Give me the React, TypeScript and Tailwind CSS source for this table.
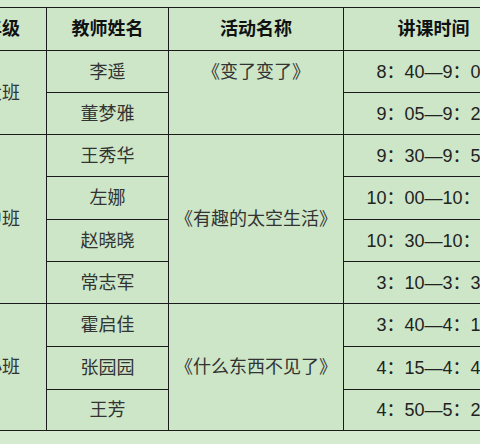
const GROUPS = [
  {
    grade: '大班',
    activity: '《变了变了》',
    top: true,
    rows: [
      { teacher: '李遥', time: '8：40—9：05', h: 'h-[42px]' },
      { teacher: '董梦雅', time: '9：05—9：25', h: 'h-[42px]' },
    ],
  },
  {
    grade: '中班',
    activity: '《有趣的太空生活》',
    top: false,
    rows: [
      { teacher: '王秀华', time: '9：30—9：55', h: 'h-[42px]' },
      { teacher: '左娜', time: '10：00—10：25', h: 'h-[43px]' },
      { teacher: '赵晓晓', time: '10：30—10：55', h: 'h-[42px]' },
      { teacher: '常志军', time: '3：10—3：35', h: 'h-[42px]' },
    ],
  },
  {
    grade: '小班',
    activity: '《什么东西不见了》',
    top: false,
    rows: [
      { teacher: '霍启佳', time: '3：40—4：10', h: 'h-[43px]' },
      { teacher: '张园园', time: '4：15—4：45', h: 'h-[43px]' },
      { teacher: '王芳', time: '4：50—5：20', h: 'h-[41px]' },
    ],
  },
];

const cell = 'border-[1.5px] border-[#1b1b1b] text-center align-middle p-0';

export default function App() {
  return (
    <div
      className="w-[480px] h-[444px] overflow-hidden bg-[#d4ebd0] pt-[7px]"
      style={{ fontFamily: '"Liberation Sans", "Noto Sans CJK SC", sans-serif' }}
    >
      <table className="-ml-[43px] w-[566px] table-fixed border-collapse bg-[#cce6c7] text-[18px] leading-none">
        <colgroup>
          <col className="w-[89px]" />
          <col className="w-[122px]" />
          <col className="w-[175px]" />
          <col className="w-[180px]" />
        </colgroup>
        <thead>
          <tr className="h-[43px] text-[#111] font-bold">
            <th className={cell}>年级</th>
            <th className={cell}>教师姓名</th>
            <th className={cell}>活动名称</th>
            <th className={cell}>讲课时间</th>
          </tr>
        </thead>
        <tbody className="text-[#333]">
          {GROUPS.map((g) =>
            g.rows.map((r, i) => (
              <tr key={r.teacher} className={r.h}>
                {i === 0 && (
                  <td rowSpan={g.rows.length} className={cell}>
                    {g.grade}
                  </td>
                )}
                <td className={cell}>{r.teacher}</td>
                {i === 0 && (
                  <td
                    rowSpan={g.rows.length}
                    className={g.top ? 'border-[1.5px] border-[#1b1b1b] text-center align-top p-0 pt-[12px]' : cell}
                  >
                    {g.activity}
                  </td>
                )}
                <td className={`${cell} text-[#222]`}>{r.time}</td>
              </tr>
            ))
          )}
        </tbody>
      </table>
    </div>
  );
}
